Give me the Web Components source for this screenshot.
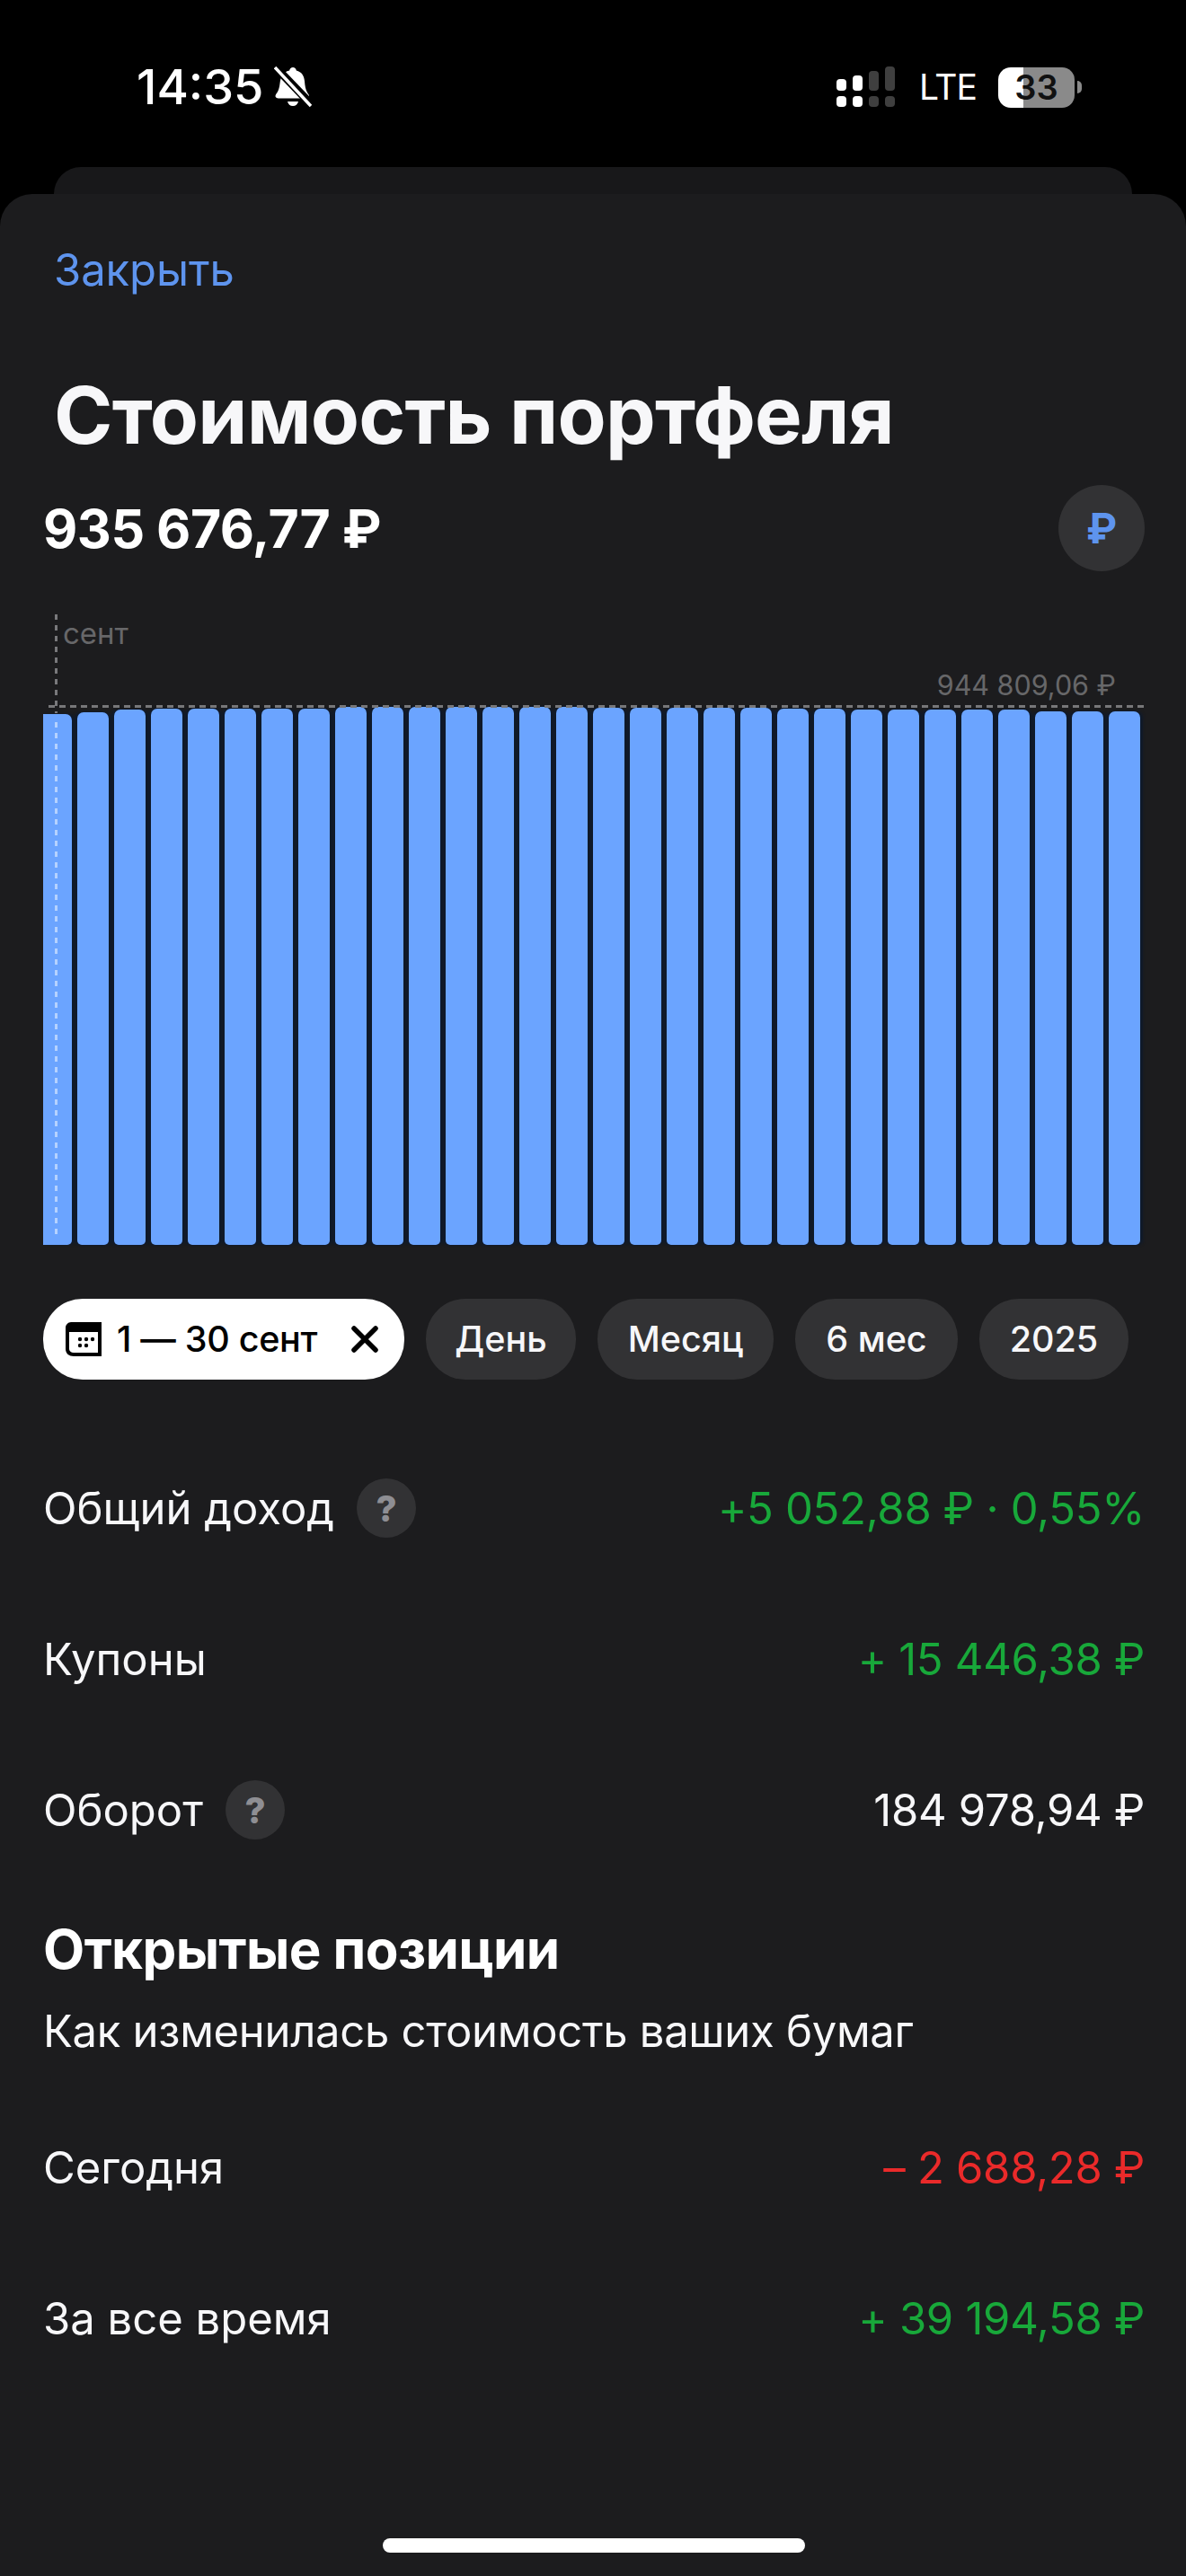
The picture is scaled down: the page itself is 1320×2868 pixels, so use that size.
<!DOCTYPE html>
<html lang="ru">
<head>
<meta charset="utf-8">
<title>Стоимость портфеля</title>
<style>
	html, body { margin: 0; background: #000; }
	body { width: 1320px; height: 2868px; overflow: hidden; font-family: Inter, "Liberation Sans", sans-serif; color: #fff; }
	portfolio-sheet stat-row[tone="up"] { --value: #18a83a; }
	portfolio-sheet stat-row[tone="down"] { --value: #ea2a2a; }
</style>
</head>
<body>
<status-bar time="14:35" battery="33"></status-bar>
<portfolio-sheet>
	<span slot="close">Закрыть</span>
	<span slot="title">Стоимость портфеля</span>
	<span slot="amount">935 676,77 ₽</span>
	<bar-chart month="сент" max="944 809,06 ₽"></bar-chart>
	<period-bar>
		<period-chip active>1 — 30 сент</period-chip>
		<period-chip style="padding:0 32px">День</period-chip>
		<period-chip>Месяц</period-chip>
		<period-chip>6 мес</period-chip>
		<period-chip>2025</period-chip>
	</period-bar>
	<stat-row tone="up" hint style="margin-top:110px">Общий доход<span slot="value">+5 052,88 ₽ · 0,55%</span></stat-row>
	<stat-row tone="up">Купоны<span slot="value">+ 15 446,38 ₽</span></stat-row>
	<stat-row hint>Оборот<span slot="value">184 978,94 ₽</span></stat-row>
	<section-head title="Открытые позиции" text="Как изменилась стоимость ваших бумаг"></section-head>
	<stat-row tone="down">Сегодня<span slot="value">– 2 688,28 ₽</span></stat-row>
	<stat-row tone="up">За все время<span slot="value">+ 39 194,58 ₽</span></stat-row>
</portfolio-sheet>

<script>
class StatusBar extends HTMLElement {
	constructor() {
		super();
		this.attachShadow({ mode: 'open' });
	}

	connectedCallback() {
		this.shadowRoot.innerHTML = `
		<style>
			:host { display: block; height: 216px; background: #000; }
			.bar { height: 186px; box-sizing: border-box; padding: 74px 116px 0 152px; display: flex; align-items: flex-start; justify-content: space-between; }
			.left, .right { display: flex; align-items: center; height: 46px; }
			.time { font: 500 54px/46px Inter, sans-serif; }
			.bell { margin-left: 12px; }
			.lte { font: 400 39px/46px Inter, sans-serif; width: 61px; margin: 0 27px; letter-spacing: -1px; white-space: nowrap; }
			.battery { position: relative; width: 85px; height: 45px; border-radius: 14px; overflow: hidden; background: linear-gradient(90deg, #fff 0 33%, #8a8a8a 33%); color: #111; font: 600 38px/45px Inter, sans-serif; text-align: center; }
			.nub { width: 5px; height: 14px; margin-left: 3px; background: #8a8a8a; border-radius: 0 7px 7px 0; }
			.back { height: 30px; margin: 0 60px; background: #18181a; border-radius: 30px 30px 0 0; }
		</style>
		<div class="bar">
			<div class="left">
				<span class="time">${this.getAttribute('time')}</span>
				<svg class="bell" width="42" height="46" viewBox="0 0 42 46">
					<path fill="#fff" d="M21 1c2 0 3.500 1.500 3.800 3.500 6 1.500 8.700 6 9.200 12 .4 5 1 9 3 12.500 1 1.800 2 2.500 2 4 0 1.500-1 2.500-3 2.500H5c-2 0-3.500-1-3.500-2.500 0-1.500 1-2.500 2-4 1.700-2.500 2.500-6 3-10 .8-7 3-13 10.700-14.500C17.500 2.500 19 1 21 1zM15 39h12c-.6 3-3 5-6 5s-5.400-2-6-5z"/>
					<path stroke="#000" stroke-width="9" d="M-1 -2 45 46"/>
					<path stroke="#fff" stroke-width="3.500" d="M1 1 41 44"/>
				</svg>
			</div>
			<div class="right">
				<svg width="65" height="46" viewBox="0 0 65 46" fill="#fff">
					<rect x="0" y="14" width="11" height="13" rx="4"/>
					<rect x="0" y="33" width="11" height="12" rx="4"/>
					<rect x="18" y="10" width="11" height="17" rx="4"/>
					<rect x="18" y="33" width="11" height="12" rx="4"/>
					<g fill="#3f3f3f">
						<rect x="36" y="5" width="11" height="22" rx="4"/>
						<rect x="36" y="33" width="11" height="12" rx="4"/>
						<rect x="54" y="0" width="11" height="27" rx="4"/>
						<rect x="54" y="33" width="11" height="12" rx="4"/>
					</g>
				</svg>
				<span class="lte">LTE</span>
				<div class="battery">${this.getAttribute('battery')}</div>
				<div class="nub"></div>
			</div>
		</div>
		<div class="back"></div>`;
	}
}

class PortfolioSheet extends HTMLElement {
	constructor() {
		super();
		this.attachShadow({ mode: 'open' });
		this.shadowRoot.innerHTML = `
		<style>
			:host { display: block; height: 2652px; box-sizing: border-box; background: #1c1c1e; border-radius: 36px 36px 0 0; padding: 55px 48px 0; position: relative; }
			.close { font-size: 49px; line-height: 60px; letter-spacing: -.1px; color: #5e94ee; padding-left: 12px; }
			.title { font-size: 88.500px; font-weight: 700; line-height: 100px; letter-spacing: -.8px; color: #f7f7f9; padding-left: 12px; margin-top: 81px; }
			.head { display: flex; align-items: center; justify-content: space-between; height: 96px; margin-top: 28px; }
			.amount { font-size: 59px; font-weight: 700; letter-spacing: -.5px; }
			.cur { width: 96px; height: 96px; border-radius: 50%; background: #323234; color: #5e94ee; display: flex; align-items: center; justify-content: center; font-size: 46px; font-weight: 700; margin-right: -2px; }
			.home { position: absolute; left: 426px; top: 2610px; width: 470px; height: 16px; border-radius: 8px; background: #fff; }
		</style>
		<div class="close"><slot name="close"></slot></div>
		<div class="title"><slot name="title"></slot></div>
		<div class="head">
			<div class="amount"><slot name="amount"></slot></div>
			<div class="cur">₽</div>
		</div>
		<slot></slot>
		<div class="home"></div>`;
	}
}

// top edge of each bar in page px, left to right
const BAR_TOPS = [795, 793, 790, 789, 789, 789, 789, 789, 787, 787, 787, 787, 787, 787, 787, 788, 788, 788, 788, 788, 789, 789, 790, 790, 790, 790, 790, 792, 792, 792];

class BarChart extends HTMLElement {
	constructor() {
		super();
		this.attachShadow({ mode: 'open' });
	}

	connectedCallback() {
		const bars = BAR_TOPS.map((top, i) => {
			const cls = i === 0 ? 'bar first' : 'bar';
			return `<div class="${cls}" style="height:${1386 - top}px"></div>`;
		}).join('');

		this.shadowRoot.innerHTML = `
		<style>
			:host { display: block; position: relative; height: 702px; margin-top: 48px; }
			.plot { position: absolute; left: 0; right: 2px; bottom: 0; display: flex; align-items: flex-end; gap: 6px; }
			.bar { width: 35px; background: #6ba4ff; border-radius: 7px 7px 5px 5px; box-shadow: 3px 0 3px #0f1a2c, -3px 0 3px #0f1a2c; }
			.first { width: 32px; border-radius: 0 7px 5px 0; box-shadow: 3px 0 3px #0f1a2c; }
			.month, .max { position: absolute; line-height: 36px; color: #676769; white-space: nowrap; }
			.month { left: 22px; top: 3px; font-size: 33px; }
			.max { right: 30px; top: 61px; font-size: 30.500px; }
			.vline { position: absolute; left: 13px; top: 0; width: 3px; background: repeating-linear-gradient(180deg, var(--dash) 0 6px, transparent 6px 12px); }
			.vline { --dash: #79797c; height: 110px; }
			.vline.inside { --dash: #b5d2ff; top: 120px; height: 576px; }
			.hline { position: absolute; left: 6px; right: -2px; top: 101px; height: 3px; background: repeating-linear-gradient(90deg, #777779 0 7px, transparent 7px 12px); }
		</style>
		<div class="plot">${bars}</div>
		<div class="vline"></div>
		<div class="vline inside"></div>
		<div class="hline"></div>
		<div class="month">${this.getAttribute('month')}</div>
		<div class="max">${this.getAttribute('max')}</div>`;
	}
}

class PeriodBar extends HTMLElement {
	constructor() {
		super();
		this.attachShadow({ mode: 'open' });
		this.shadowRoot.innerHTML = `
		<style>
			:host { display: flex; gap: 24px; margin-top: 60px; }
		</style>
		<slot></slot>`;
	}
}

class PeriodChip extends HTMLElement {
	constructor() {
		super();
		this.attachShadow({ mode: 'open' });
		const active = this.hasAttribute('active');
		const calendar = `
			<svg class="cal" width="40" height="38" viewBox="0 0 40 38">
				<path fill="#000" d="M6 0h34v38H9c-5 0-9-3-9-8V6c0-3 3-6 6-6zm-2 11v19c0 2 2 4 5 4h27V11z"/>
				<g fill="#000">
					<circle cx="16" cy="19" r="2.200"/><circle cx="23" cy="19" r="2.200"/><circle cx="30" cy="19" r="2.200"/>
					<circle cx="16" cy="26" r="2.200"/><circle cx="23" cy="26" r="2.200"/>
				</g>
			</svg>`;
		const cross = `
			<svg class="x" width="30" height="30" viewBox="0 0 30 30">
				<path stroke="#000" stroke-width="5.500" stroke-linecap="round" d="M3 3 27 27M27 3 3 27"/>
			</svg>`;

		this.shadowRoot.innerHTML = `
		<style>
			:host { display: flex; align-items: center; height: 90px; box-sizing: border-box; padding: 0 34px; border-radius: 44px; background: #323234; color: #f7f7f9; font-size: 39.500px; font-weight: 500; white-space: nowrap; }
			:host([active]) { background: #fff; color: #000; padding: 0 29px 0 25px; letter-spacing: -.3px; }
			.cal { margin-right: 17px; }
			.x { margin-left: 38px; }
		</style>
		${active ? calendar : ''}<slot></slot>${active ? cross : ''}`;
	}
}

class StatRow extends HTMLElement {
	constructor() {
		super();
		this.attachShadow({ mode: 'open' });
		const hint = this.hasAttribute('hint') ? '<span class="hint">?</span>' : '';
		this.shadowRoot.innerHTML = `
		<style>
			:host { display: flex; align-items: center; justify-content: space-between; height: 66px; margin-bottom: 102px; font-size: 49px; color: #f7f7f9; }
			.label { display: flex; align-items: center; }
			.hint { width: 66px; height: 66px; border-radius: 50%; background: #323234; color: #8e8e93; font-size: 40px; font-weight: 800; display: flex; align-items: center; justify-content: center; margin-left: 25px; }
			.value { color: var(--value, #f7f7f9); margin-right: -2px; letter-spacing: -.3px; }
		</style>
		<div class="label"><slot></slot>${hint}</div>
		<div class="value"><slot name="value"></slot></div>`;
	}
}

class SectionHead extends HTMLElement {
	constructor() {
		super();
		this.attachShadow({ mode: 'open' });
	}

	connectedCallback() {
		this.shadowRoot.innerHTML = `
		<style>
			:host { display: block; margin: -15px 0 88px; }
			.t { font-size: 60px; font-weight: 700; line-height: 70px; letter-spacing: -.6px; }
			.s { font-size: 49px; line-height: 60px; margin-top: 27px; letter-spacing: -.3px; color: #f7f7f9; }
		</style>
		<div class="t">${this.getAttribute('title')}</div>
		<div class="s">${this.getAttribute('text')}</div>`;
	}
}

customElements.define('status-bar', StatusBar);
customElements.define('portfolio-sheet', PortfolioSheet);
customElements.define('bar-chart', BarChart);
customElements.define('period-bar', PeriodBar);
customElements.define('period-chip', PeriodChip);
customElements.define('stat-row', StatRow);
customElements.define('section-head', SectionHead);
</script>
</body>
</html>
